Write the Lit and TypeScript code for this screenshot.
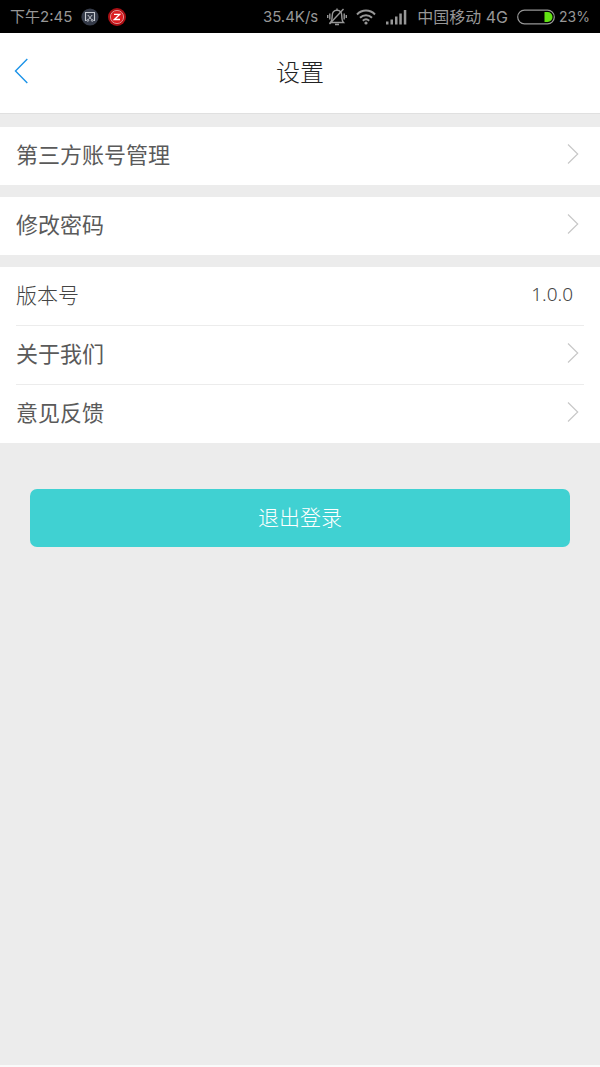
import { LitElement, html, css } from "lit";
import { customElement, property } from "lit/decorators.js";

@customElement("status-bar")
class StatusBar extends LitElement {
  static styles = css`
    :host {
      display: flex;
      align-items: center;
      justify-content: space-between;
      height: 33px;
      padding: 0 10px;
      background: #000;
      color: #979797;
      font-family: Inter, "Noto Sans CJK SC", sans-serif;
      font-size: 15px;
      line-height: 24px;
      white-space: nowrap;
    }
    .side {
      display: flex;
      align-items: center;
      gap: 9px;
    }
    .battery {
      display: flex;
      align-items: center;
      gap: 4px;
    }
    .percent {
      font-size: 14px;
    }
    .carrier {
      font-size: 16px;
    }
    svg {
      display: block;
      flex: none;
    }
  `;

  render() {
    return html`
      <div class="side">
        <span>下午2:45</span>
        <svg width="18" height="20" viewBox="0 0 18 20" fill="none">
          <circle cx="9" cy="10" r="8.6" fill="#353b49" />
          <path d="M5.500 13.500H4.500V5.500H13.500V13.500H12.500" stroke="#c8ccd2" stroke-width="1.1" />
          <path d="M6.800 8L10.600 12.500M11.200 8L7.400 12.500" stroke="#c8ccd2" stroke-width="1" />
          <circle cx="6.800" cy="13.400" r="0.900" stroke="#c8ccd2" stroke-width="0.900" />
          <circle cx="11.200" cy="13.400" r="0.900" stroke="#c8ccd2" stroke-width="0.900" />
        </svg>
        <svg width="18" height="20" viewBox="1 0 18 20" fill="none">
          <circle cx="10" cy="10" r="9" fill="#a90f14" />
          <circle cx="10" cy="10" r="6.6" fill="#dc1d22" stroke="#e09a9b" stroke-width="0.900" />
          <path d="M7 7.400H12.600L7.400 12.500H13" stroke="#fff" stroke-width="1.400" />
        </svg>
      </div>
      <div class="side">
        <span>35.4K/s</span>
        <svg width="20" height="20" viewBox="0 0 20 20" fill="none" stroke="#979797" stroke-width="1.4">
          <path d="M3.500 15.500H16.500C15 14 14.800 12.500 14.800 9C14.800 5.500 12.800 3.200 10 3.200C7.200 3.200 5.200 5.500 5.200 9C5.200 12.500 5 14 3.500 15.500ZM8 17.500H12M10 1.500V3" />
          <path d="M2.800 6.500V12.500M0.700 8V11M17.200 6.500V12.500M19.300 8V11" />
          <path d="M2.500 17L16.500 2" />
        </svg>
        <svg width="20" height="16" viewBox="0 0 20 16" fill="none" stroke="#979797" stroke-width="2">
          <path d="M1 5.500C6 0.300 14 0.300 19 5.500M4 8.800C7.500 5.300 12.500 5.300 16 8.800M6.800 11.800C8.700 10 11.300 10 13.200 11.800" />
          <circle cx="10" cy="14" r="1.600" fill="#979797" stroke="none" />
        </svg>
        <svg width="23" height="16" viewBox="1 0 23 16" fill="#979797">
          <path d="M2 12.500H4.500V15.500H2ZM6.500 10.500H9V15.500H6.500ZM11 7.500H13.500V15.500H11ZM15.300 4.500H17.800V15.500H15.300ZM19.800 1H22.300V15.500H19.800Z" />
        </svg>
        <span class="carrier">中国移动 4G</span>
        <div class="battery">
          <svg width="38" height="16" viewBox="0 0 38 16">
            <rect x="0.700" y="1.200" width="36.600" height="13.600" rx="6.800" fill="none" stroke="#979797" stroke-width="1.200" />
            <path d="M27.500 3H30.500A5 5 0 0 1 30.500 13H27.500Z" fill="#62e312" />
          </svg>
          <span class="percent">23%</span>
        </div>
      </div>
    `;
  }
}

@customElement("setting-row")
class SettingRow extends LitElement {
  @property() label = "";
  @property() value = "";

  static styles = css`
    :host {
      display: block;
    }
    .row {
      display: flex;
      align-items: center;
      justify-content: space-between;
      box-sizing: border-box;
      height: 58px;
      padding: 0 21px 4px 16px;
      color: #5a5a5a;
      font-size: 22px;
      line-height: 32px;
      text-decoration: none;
    }
    .text {
      padding-bottom: 3px;
    }
    .info {
      padding: 0 27px 2px 16px;
    }
    .name {
      padding-bottom: 2px;
      color: #444;
      font-size: 21px;
      font-weight: 300;
    }
    .value {
      padding-bottom: 2px;
      color: #444;
      font-family: "Noto Sans", "Noto Sans CJK SC", sans-serif;
      font-size: 19px;
      font-weight: 300;
    }
    svg {
      display: block;
    }
  `;

  render() {
    if (this.value) {
      return html`<div class="row info">
        <span class="name">${this.label}</span><span class="value">${this.value}</span>
      </div>`;
    }
    return html`<a class="row" href="#">
      <span class="text">${this.label}</span>
      <svg width="12" height="20" viewBox="0 0 12 20" fill="none" stroke="#c8c8c8" stroke-width="1.2">
        <path d="M1 0.500L10.700 10L1 19.500" />
      </svg>
    </a>`;
  }
}

@customElement("app-root")
class AppRoot extends LitElement {
  static styles = css`
    :host {
      display: flex;
      flex-direction: column;
      min-height: 100vh;
      box-sizing: border-box;
      background: #ececec;
      border-bottom: 2px solid #fafafa;
      font-family: "Noto Sans CJK SC", sans-serif;
    }
    header {
      display: grid;
      grid-template-columns: 48px 1fr 48px;
      align-items: center;
      height: 80px;
      background: #fff;
      border-bottom: 1px solid #e0e0e0;
    }
    .back {
      display: flex;
      align-items: center;
      height: 48px;
      padding: 0 0 4px 14px;
      border: 0;
      background: none;
    }
    h1 {
      margin: 0;
      padding-bottom: 4px;
      color: #222;
      font-size: 24px;
      font-weight: 300;
      line-height: 36px;
      text-align: center;
    }
    main {
      display: flex;
      flex-direction: column;
      gap: 12px;
      padding-top: 13px;
    }
    section {
      background: #fff;
    }
    hr {
      height: 1px;
      margin: 0 16px;
      border: 0;
      background: #ececec;
    }
    .logout {
      height: 58px;
      margin: 34px 30px 0;
      padding: 0 0 4px;
      border: 0;
      border-radius: 7px;
      background: #40d1d2;
      color: #fff;
      font-family: inherit;
      font-size: 21px;
      font-weight: 300;
      line-height: 32px;
    }
  `;

  render() {
    return html`
      <status-bar></status-bar>
      <header>
        <button class="back" aria-label="返回">
          <svg width="14" height="26" viewBox="0 0 14 26" fill="none" stroke="#1c93e8" stroke-width="1.4">
            <path d="M13.300 1L1.500 13L13.300 25" />
          </svg>
        </button>
        <h1>设置</h1>
      </header>
      <main>
        <section><setting-row label="第三方账号管理"></setting-row></section>
        <section><setting-row label="修改密码"></setting-row></section>
        <section>
          <setting-row label="版本号" value="1.0.0"></setting-row>
          <hr />
          <setting-row label="关于我们"></setting-row>
          <hr />
          <setting-row label="意见反馈"></setting-row>
        </section>
        <button class="logout">退出登录</button>
      </main>
    `;
  }
}
